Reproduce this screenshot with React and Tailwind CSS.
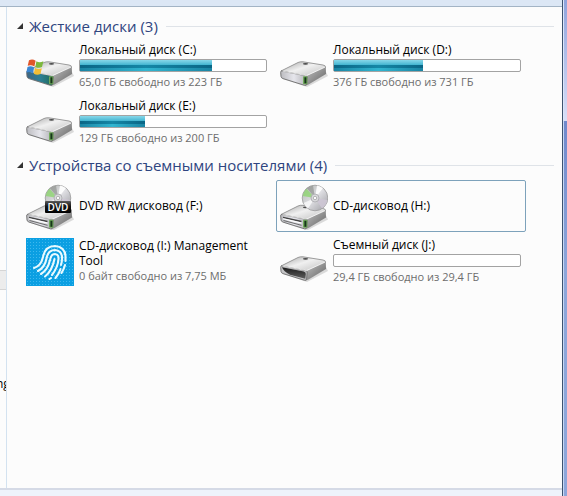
import React from 'react';

const hardDisks = [
  { name: 'Локальный диск (C:)', icon: 'system', used: 71, info: '65,0 ГБ свободно из 223 ГБ' },
  { name: 'Локальный диск (D:)', icon: 'disk', used: 48, info: '376 ГБ свободно из 731 ГБ' },
  { name: 'Локальный диск (E:)', icon: 'disk', used: 35, info: '129 ГБ свободно из 200 ГБ' },
];

const removable = [
  { name: 'DVD RW дисковод (F:)', icon: 'dvd' },
  { name: 'CD-дисковод (H:)', icon: 'cd', active: true },
  { name: 'CD-дисковод (I:) Management Tool', icon: 'finger', info: '0 байт свободно из 7,75 МБ' },
  { name: 'Съемный диск (J:)', icon: 'slot', used: 0, info: '29,4 ГБ свободно из 29,4 ГБ' },
];

// Gradients shared by all the drive icons
function IconDefs() {
  return (
    <svg width="0" height="0" className="absolute" aria-hidden="true">
      <defs>
        <linearGradient id="top" x1="0" y1="0" x2="1" y2="1">
          <stop offset="0" stopColor="#a2a2a2" />
          <stop offset="0.45" stopColor="#f0f0f0" />
          <stop offset="1" stopColor="#bdbdbd" />
        </linearGradient>
        <linearGradient id="front" x1="0" y1="0" x2="1" y2="0">
          <stop offset="0" stopColor="#bcbcc0" />
          <stop offset="0.5" stopColor="#e6e6ec" />
          <stop offset="1" stopColor="#b0b0b4" />
        </linearGradient>
        <linearGradient id="side" x1="0" y1="0" x2="1" y2="1">
          <stop offset="0" stopColor="#c0c0c0" />
          <stop offset="1" stopColor="#626262" />
        </linearGradient>
        <linearGradient id="teal" x1="0" y1="0" x2="1" y2="0">
          <stop offset="0" stopColor="#3f6583" />
          <stop offset="0.5" stopColor="#2d7f96" />
          <stop offset="1" stopColor="#1f6a58" />
        </linearGradient>
        <linearGradient id="hole" x1="0" y1="0" x2="0" y2="1">
          <stop offset="0" stopColor="#1c1c1c" />
          <stop offset="1" stopColor="#5e5e5e" />
        </linearGradient>
        <linearGradient id="disc" x1="0" y1="0" x2="1" y2="1">
          <stop offset="0" stopColor="#b0b4b0" />
          <stop offset="0.5" stopColor="#dedee2" />
          <stop offset="1" stopColor="#9a9aa0" />
        </linearGradient>
        <linearGradient id="label" x1="0" y1="0" x2="0" y2="1">
          <stop offset="0" stopColor="#5a5a5a" />
          <stop offset="0.45" stopColor="#161616" />
          <stop offset="1" stopColor="#000" />
        </linearGradient>
        <pattern id="mesh" width="3" height="3" patternUnits="userSpaceOnUse">
          <rect width="3" height="3" fill="#0b9fe2" />
          <rect x="1" y="1" width="1" height="1" fill="#3fb8ee" />
        </pattern>
      </defs>
    </svg>
  );
}

function DriveBody({ front = 'url(#front)', led = true }) {
  return (
    <>
      <path d="M3 36 L27 44 L48 33 L46 29 Z" fill="#9a9a9a" opacity="0.35" />
      <path d="M1 28 L18 19.5 Q20 18.5 23 18.8 L43 22 Q46 22.5 45.5 24.5 L27 33.5 Z" fill="url(#top)" stroke="#858585" strokeWidth="0.8" />
      <path d="M27 33 L45.8 24 L46 31 L28.5 41.5 L26 42.5 Z" fill="url(#side)" />
      <path d="M1.5 28 Q0.6 28 0.7 29.5 L1 33.5 Q1.2 35 3 35.6 L24.5 42.3 Q26.5 42.8 26.6 41 L27.2 34 Q27.2 33 26 32.8 Z" fill={front} stroke="#6c6c6c" strokeWidth="0.9" />
      <path d="M2.5 28.2 L26.5 32.6 L45 24.2" fill="none" stroke="#fff" strokeWidth="0.9" opacity="0.8" />
      <ellipse cx="25.5" cy="20.8" rx="2.6" ry="0.9" fill="#4b4b4b" />
      {led && (
        <>
          <rect x="23" y="33.3" width="4.4" height="8" rx="0.8" fill="#6fa95a" />
          <rect x="24.4" y="34.3" width="2" height="6" fill="#17361b" />
        </>
      )}
    </>
  );
}

function Disc() {
  return (
    <>
      <circle cx="35" cy="16" r="12.8" fill="url(#disc)" stroke="#9c9c9c" strokeWidth="0.8" />
      <path d="M35 16 L22.6 14 A12.6 12.6 0 0 1 26.5 6.8 Z" fill="#8fd672" opacity="0.8" />
      <path d="M35 16 L27 6.2 A12.6 12.6 0 0 1 33 3.6 Z" fill="#939593" opacity="0.7" />
      <path d="M35 16 L37 3.6 A12.6 12.6 0 0 1 43 6.3 Z" fill="#fff" opacity="0.9" />
      <path d="M35 16 L47.4 18 A12.6 12.6 0 0 1 42 26.4 Z" fill="#cdc5d4" opacity="0.9" />
      <path d="M35 16 L28 26.4 A12.6 12.6 0 0 1 23.5 21 Z" fill="#fff" opacity="0.7" />
      <circle cx="35" cy="16" r="4" fill="#d9d9dc" stroke="#a9a9ad" strokeWidth="0.8" />
      <circle cx="35" cy="16" r="1.7" fill="#fcfcfc" stroke="#909090" strokeWidth="0.6" />
    </>
  );
}

function OpticalBody() {
  return (
    <g transform="translate(0 4.5)">
      <DriveBody />
      <path d="M3 30.8 L21.5 35" stroke="#444" strokeWidth="1.3" />
      <path d="M3 32.3 L21.5 36.6" stroke="#fff" strokeWidth="1.1" />
      <path d="M3.5 34 L21.5 38.8" stroke="#6a6a6a" strokeWidth="1" />
    </g>
  );
}

function DriveIcon({ type }) {
  return (
    <svg viewBox="0 0 48 48" className="size-12 shrink-0" aria-hidden="true">
      {type === 'disk' && <DriveBody />}
      {type === 'system' && (
        <>
          <DriveBody front="url(#teal)" />
          <path d="M3 17.3 Q6.5 15.3 9.6 17.8 L8.4 23.4 Q5 21.4 1.7 22.8 Z" fill="#e0562a" />
          <path d="M10.4 18.3 Q13.5 20.3 17.4 18.3 L16 24.1 Q12.8 25.6 9.3 23.9 Z" fill="#7db83c" />
          <path d="M1.5 23.9 Q5 22.5 8.1 24.5 L6.9 30.2 Q3.8 28.2 0.3 29.6 Z" fill="#3b86d2" />
          <path d="M9 25 Q12.5 26.8 15.8 25.3 L14.5 31 Q11.2 32.6 7.8 30.8 Z" fill="#f3be35" />
        </>
      )}
      {type === 'cd' && (
        <>
          <OpticalBody />
          <Disc />
        </>
      )}
      {type === 'dvd' && (
        <>
          <OpticalBody />
          <g transform="translate(-3 0)">
            <Disc />
          </g>
          <rect x="19" y="19" width="26" height="12" rx="1" fill="url(#label)" />
          <text x="32" y="29" textAnchor="middle" fontSize="10" fontFamily="Open Sans, sans-serif" fontWeight="600" fill="#fff">DVD</text>
        </>
      )}
      {type === 'slot' && (
        <>
          <DriveBody front="#c4c4c6" led={false} />
          <path d="M2 29.3 L23.8 33.6 Q26 34.2 25.8 36 L25.3 40.8 L10 36.8 Q3.5 33.5 2 29.3 Z" fill="url(#hole)" />
        </>
      )}
      {type === 'finger' && (
        <>
          <rect width="48" height="48" fill="url(#mesh)" />
          <g fill="none" stroke="#eafaff" strokeWidth="2.1" strokeLinecap="round">
            <path d="M8 30 Q15 28 17 19 Q19 8 29 8 Q40 9 39.5 20 L39.5 23" />
            <path d="M12 33 Q19 29 20.5 20.5 Q22 12 29 12 Q36.5 13 36 20.5 Q36 24 35 27" />
            <path d="M15 36 Q22 31.5 24 22 Q25 16 29 16 Q33 16.5 32.5 21 Q32 29 26 37" />
            <path d="M19 38.5 Q26 33 28.5 21" />
            <path d="M39 27 Q38 31 35.5 35" />
            <path d="M34.5 31 Q33 36 29.5 40" />
            <path d="M25 40 L23.5 41" />
          </g>
        </>
      )}
    </svg>
  );
}

function UsageBar({ used, name }) {
  return (
    <div
      role="meter"
      aria-label={name}
      aria-valuemin="0"
      aria-valuemax="100"
      aria-valuenow={used}
      className="my-0.5 h-[13px] rounded-xs border border-[#a3a3a3] bg-white"
    >
      <div className="flex h-full flex-col" style={{ width: `${used}%` }}>
        <div className="flex-1 bg-linear-to-b from-[#86d8ea] to-[#3fb4d0]" />
        <div className="h-[3px] bg-linear-to-r from-[#0a6686] via-[#1587a6] to-[#0a6686]" />
        <div className="h-[3px] bg-linear-to-r from-[#1a84a3] via-[#31b5d0] to-[#1a84a3]" />
      </div>
    </div>
  );
}

function DriveTile({ drive }) {
  return (
    <button
      type="button"
      className={`flex h-13 items-center gap-[5px] rounded-xs border pr-1 pl-[3px] text-left ${
        drive.active ? 'border-[#7da2bb]' : 'border-transparent'
      }`}
    >
      <DriveIcon type={drive.icon} />
      <div className="min-w-0 flex-1 pb-0.5 text-[12px] leading-[15px]">
        <div className="text-black">{drive.name}</div>
        {drive.used !== undefined && <UsageBar used={drive.used} name={drive.name} />}
        {drive.info && <div className="text-[11px] leading-4 text-[#6d6d6d]">{drive.info}</div>}
      </div>
    </button>
  );
}

function DriveGroup({ title, drives }) {
  return (
    <section className="pb-px">
      <h2 className="flex h-[30px] items-center gap-2 pr-2 pl-2.5">
        <button type="button" className="flex items-center gap-1.5 text-[15px] leading-5 whitespace-nowrap text-[#2f4580]">
          <svg viewBox="0 0 6 6" className="size-1.5" aria-hidden="true">
            <path d="M6 0 V6 H0 Z" fill="#333" />
          </svg>
          {title}
        </button>
        <span className="h-px flex-1 bg-[#dfe3e8]" />
      </h2>
      <div className="grid grid-cols-[repeat(auto-fill,250px)] gap-1 pl-[15px]">
        {drives.map((drive) => (
          <DriveTile key={drive.name} drive={drive} />
        ))}
      </div>
    </section>
  );
}

export default function App() {
  return (
    <div className="flex h-screen bg-[#fcfcfc] font-['Open_Sans','Noto_Sans',sans-serif]">
      <IconDefs />
      <div className="flex min-w-0 flex-1 flex-col">
        <div className="h-[7px] border-b border-[#a3b4c5] bg-[#dce7f5]" />
        <div className="flex min-h-0 flex-1">
          {/* Edge of the navigation pane */}
          <aside className="flex w-[7px] flex-col overflow-hidden border-r border-[#d3e2f0] pt-[263px] text-[12px] leading-4">
            <div className="h-5 w-full border-y border-[#d5d5d5] bg-[#ececec]" />
            <span className="mt-[86px] -ml-1 text-black">ng</span>
          </aside>
          <main className="min-w-0 flex-1 pt-1">
            <DriveGroup title="Жесткие диски (3)" drives={hardDisks} />
            <DriveGroup title="Устройства со съемными носителями (4)" drives={removable} />
          </main>
        </div>
        <div className="h-2 border-t-2 border-[#d5dae6] bg-[#eef3fb]" />
      </div>
      {/* Window frame */}
      <div className="flex w-[5px] flex-col border-l border-[#3d5270]">
        <div className="h-[121px] border-l border-[#dde6f8] bg-linear-to-b from-[#8fa3dc] to-[#d9dff8]" />
        <div className="flex-1 border-l border-[#c9d8f2] bg-linear-to-b from-[#7089cc] to-[#8da6da] to-40%" />
      </div>
    </div>
  );
}
